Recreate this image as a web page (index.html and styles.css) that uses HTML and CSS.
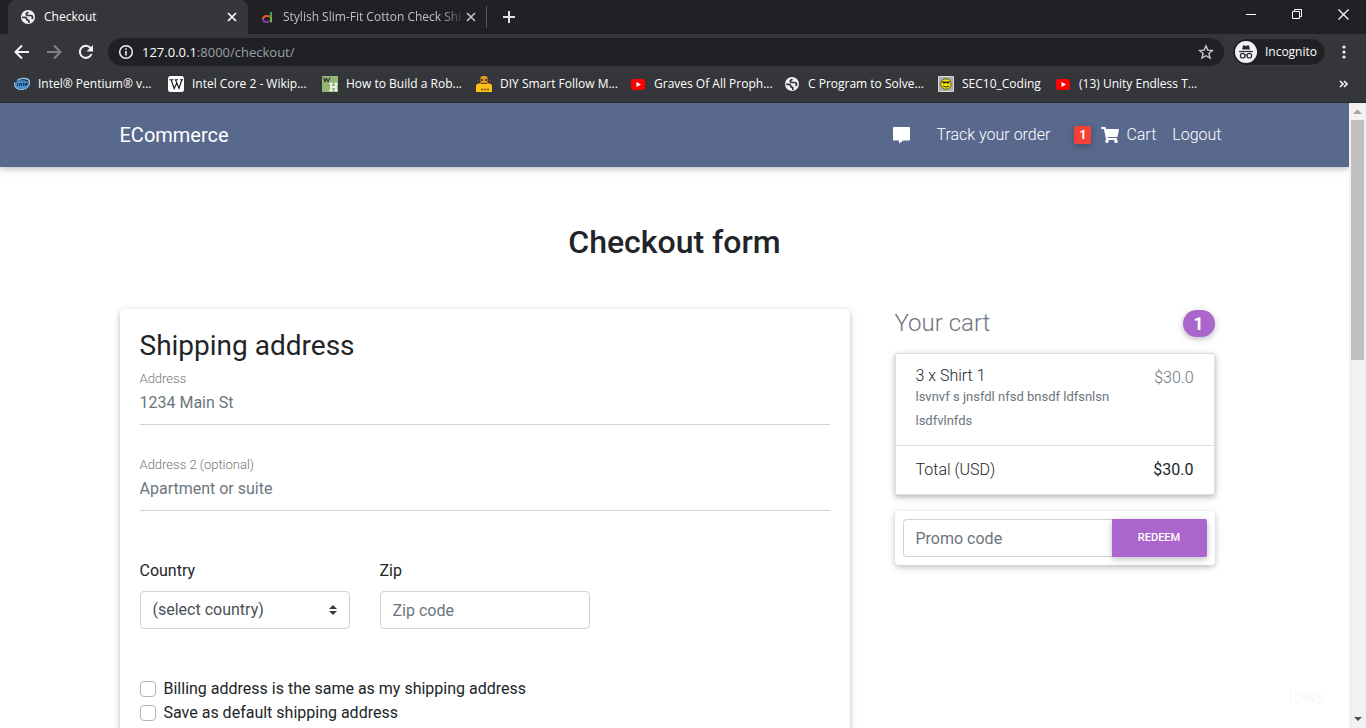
FILE: index.html
```html
<!DOCTYPE html>
<html lang="en">
<head>
<meta charset="utf-8">
<meta name="viewport" content="width=device-width, initial-scale=1">
<title>Checkout</title>
<link rel="stylesheet" href="styles.css">
</head>
<body>
<svg class="defs" aria-hidden="true">
  <symbol id="globe" viewBox="0 0 16 16"><circle cx="8" cy="8" r="7" fill="#f1f3f4"/><path d="M2.200 8.300H5q1.500 0 1.700 1.500L7 11l1.800.5V14M8.500 3.200 6.300 4.500q-.3 2 1.500 2h3q2 .2 1.800 2.300l-1 1" fill="none" stroke="#35363a" stroke-width="1.700"/></symbol>
  <symbol id="tube" viewBox="0 0 16 16"><rect x="1" y="3" width="14" height="11" rx="2.5" fill="#f00"/><path d="M6.500 6v5L11 8.500z" fill="#fff"/></symbol>
  <symbol id="cross" viewBox="0 0 10 10"><path d="m1 1 8 8M9 1 1 9" fill="none" stroke="currentColor" stroke-width="1.7"/></symbol>
</svg>

<header class="browser">
  <div class="tabstrip">
    <div class="tab tab-active">
      <svg class="favicon"><use href="#globe"/></svg>
      <span class="tab-title">Checkout</span>
      <button class="tab-close" aria-label="Close tab"><svg width="10" height="10"><use href="#cross"/></svg></button>
    </div>
    <div class="tab">
      <svg class="favicon" viewBox="0 0 16 16" fill="none" stroke-width="2"><path d="M12 3v5" stroke="#3aa655"/><path d="M12 8v5.500" stroke="#7bb342"/><path d="M11 7.500C7 6 4 7.500 4 10" stroke="#f0592a"/><path d="M4 10c0 3.500 5 4 7 1.500" stroke="#7a3ea8"/></svg>
      <span class="tab-title tab-fade">Stylish Slim-Fit Cotton Check Shir</span>
      <button class="tab-close" aria-label="Close tab"><svg width="10" height="10"><use href="#cross"/></svg></button>
    </div>
    <button class="new-tab" aria-label="New tab"><svg width="12" height="12" viewBox="0 0 12 12"><path d="M6 0v12M0 6h12" stroke="#dee1e6" stroke-width="2"/></svg></button>
    <div class="window-controls">
      <button aria-label="Minimize"><svg width="11" height="11" viewBox="0 0 11 11"><path d="M0 5.500h10" stroke="#fff"/></svg></button>
      <button aria-label="Restore"><svg width="11" height="11" viewBox="0 0 11 11" fill="none" stroke="#fff"><path d="M.5 2.500h7v7h-7zM2.500 2.500v-2h7v7h-2"/></svg></button>
      <button aria-label="Close"><svg width="11" height="11" viewBox="0 0 11 11"><path d="m.5.5 10 10m0-10-10 10" stroke="#fff" stroke-width="1.200"/></svg></button>
    </div>
  </div>

  <div class="toolbar">
    <button class="tool" aria-label="Back"><svg width="16" height="16" viewBox="0 0 16 16"><path d="M15 8H2M8 1.500 1.500 8 8 14.500" fill="none" stroke="#f1f3f4" stroke-width="2"/></svg></button>
    <button class="tool" aria-label="Forward"><svg width="16" height="16" viewBox="0 0 16 16"><path d="M1 8h13M8 1.500 14.500 8 8 14.500" fill="none" stroke="#808285" stroke-width="2"/></svg></button>
    <button class="tool" aria-label="Reload"><svg width="16" height="16" viewBox="0 0 16 16"><path d="M13.500 10A6 6 0 1 1 12.500 4" fill="none" stroke="#f1f3f4" stroke-width="2"/><path d="M15 1v6.500H8.500z" fill="#f1f3f4"/></svg></button>
    <div class="omnibox">
      <svg width="16" height="16" viewBox="0 0 16 16"><circle cx="8" cy="8" r="6.300" fill="none" stroke="#f1f3f4" stroke-width="1.500"/><path d="M8 7v4.500M8 4.300v1.500" stroke="#f1f3f4" stroke-width="1.600"/></svg>
      <span class="url"><b>127.0.0.1</b>:8000/checkout/</span>
      <svg width="16" height="16" viewBox="0 0 16 16"><path d="m8 1.800 1.800 4.300 4.600.4-3.500 3 1.100 4.600L8 11.700l-4 2.400 1.100-4.600-3.500-3 4.600-.4z" fill="none" stroke="#c4c7cb" stroke-width="1.400"/></svg>
    </div>
    <div class="profile">
      <svg width="22" height="22" viewBox="0 0 22 22"><circle cx="11" cy="11" r="11" fill="#f1f3f4"/><path d="m7 8.500 1-3.800c.2-.7 1-.5 1.400-.3.900.4 2.300.4 3.200 0 .4-.2 1.200-.4 1.400.3l1 3.800z" fill="#292a2d"/><path d="M4 10.500h14" stroke="#292a2d" stroke-width="1.200"/><g fill="none" stroke="#292a2d" stroke-width="1.200"><circle cx="7.700" cy="14.700" r="2.300"/><circle cx="14.300" cy="14.700" r="2.300"/><path d="M10 14.300q1-.6 2 0"/></g></svg>
      <span>Incognito</span>
    </div>
    <button class="menu" aria-label="Menu"><svg width="4" height="14" viewBox="0 0 4 14" fill="#f1f3f4"><circle cx="2" cy="2" r="1.600"/><circle cx="2" cy="7" r="1.600"/><circle cx="2" cy="12" r="1.600"/></svg></button>
  </div>

  <nav class="bookmarks" aria-label="Bookmarks">
    <a href="#"><svg viewBox="0 0 16 16"><path d="M3 4.500C8 1 15.500 2 15.500 6.500c0 3-2 5-5 6.500M1 6.500C-.5 11 4 14.500 10 13" fill="none" stroke="#8fc3f0" stroke-width="1.400"/><ellipse cx="8" cy="8.500" rx="7" ry="4.200" fill="#4c91cf"/><path d="M3.500 7v3M5.500 10V7.500h2V10M9.300 6.500V10M11 8.500h2.500M11 10V7.500h2v1" stroke="#16334f" stroke-width="1" fill="none"/></svg>Intel® Pentium® v...</a>
    <a href="#"><svg viewBox="0 0 16 16"><rect width="16" height="16" rx="2.500" fill="#fff"/><path d="M1.500 3.800h4M7 3.800h3M12 3.800h3M3.200 4l3 8.500L9 6.500M7.600 4l3.400 8.500L13.800 4" fill="none" stroke="#111" stroke-width="1.100"/></svg>Intel Core 2 - Wikip...</a>
    <a href="#"><svg viewBox="0 0 16 16"><path fill="#93b874" d="M0 0h16v16H0z"/><path d="m1.500 1.500 1.500 4 1.500-3 1.500 3 2-4" fill="none" stroke="#333" stroke-width="1.200"/><path d="M9 7.500v7M14 7.500v7M9 11h5M7.500 7.500h3M12.500 7.500h3M7.500 14.500h3M12.500 14.500h3" stroke="#fff" stroke-width="1.500"/></svg>How to Build a Rob...</a>
    <a href="#"><svg viewBox="0 0 16 16"><path fill="#d99b25" d="M4.500 1 6 0h4l1.500 1.500V8h-7z"/><path fill="#fcc016" d="M0 16v-5.500q0-3 3-3h10q3 0 3 3V16z"/><path fill="#754019" d="M5 3h2v2H5zm4 0h2v2H9zM5 7h6v1H5zM2 4h2v1H2zm10 0h2v1h-2z"/><g fill="#695017"><circle cx="6" cy="13.500" r="1"/><circle cx="9" cy="13.500" r="1"/><circle cx="12" cy="13.500" r="1"/></g></svg>DIY Smart Follow M...</a>
    <a href="#"><svg><use href="#tube"/></svg>Graves Of All Proph...</a>
    <a href="#"><svg><use href="#globe"/></svg>C Program to Solve...</a>
    <a href="#" class="short"><svg viewBox="0 0 16 16"><path fill="#aaa" stroke="#d8d8d8" d="M.5.5h15v15H.5z"/><circle cx="8" cy="8" r="5.200" fill="#f6e900" stroke="#36360c" stroke-width=".7"/><path fill="#222" d="M4 5.500h8L11 7.500H9L8 6.500l-1 1H5z"/><path d="M5 9.800q3 2.800 6 0" fill="none" stroke="#222"/></svg>SEC10_Coding</a>
    <a href="#"><svg><use href="#tube"/></svg>(13) Unity Endless T...</a>
    <button class="more" aria-label="More bookmarks"><svg width="9" height="8" viewBox="0 0 9 8"><path d="m1 1 3 3-3 3M5 1l3 3-3 3" fill="none" stroke="#f1f3f4" stroke-width="1.700"/></svg></button>
  </nav>
</header>

<div class="viewport">
  <div class="page">
    <nav class="navbar">
      <div class="container navbar-row">
        <a class="brand" href="#">ECommerce</a>
        <div class="nav-links">
          <a class="chat" href="#" aria-label="Messages"><svg width="17" height="17" viewBox="0 0 17 17"><path d="M1 0h15q1 0 1 1v11.500q0 1-1 1h-5.500L6 16.500v-3H1q-1 0-1-1V1q0-1 1-1z" fill="#fff"/></svg></a>
          <a class="track" href="#">Track your order</a>
          <a class="cart-link" href="#"><span class="count">1</span><svg width="18" height="16" viewBox="0 0 576 512"><path fill="#fff" d="M528 301 575 93c3-15-8-29-23-29H159l-9-45C148 8 138 0 127 0H24C11 0 0 11 0 24v16c0 13 11 24 24 24h70l70 343a56 56 0 1 0 67 9h210a56 56 0 1 0 64-10l5-25c4-15-8-29-23-29H218l-6-32h293c11 0 21-8 23-19z"/></svg>Cart</a>
          <a href="#">Logout</a>
        </div>
      </div>
    </nav>

    <main class="container">
      <h2 class="title">Checkout form</h2>
      <div class="columns">
        <form class="card">
          <h3>Shipping address</h3>
          <div class="field">
            <label for="address">Address</label>
            <input id="address" type="text" placeholder="1234 Main St">
          </div>
          <div class="field">
            <label for="address2">Address 2 (optional)</label>
            <input id="address2" type="text" placeholder="Apartment or suite">
          </div>
          <div class="pair">
            <div class="boxed">
              <label for="country">Country</label>
              <div class="select">
                <select id="country"><option>(select country)</option></select>
                <svg width="8" height="10" viewBox="0 0 4 5"><path fill="#343a40" d="M2 0 0 2h4zm0 5L0 3h4z"/></svg>
              </div>
            </div>
            <div class="boxed">
              <label for="zip">Zip</label>
              <input id="zip" type="text" placeholder="Zip code">
            </div>
          </div>
          <div class="checks">
            <label><input type="checkbox">Billing address is the same as my shipping address</label>
            <label><input type="checkbox">Save as default shipping address</label>
          </div>
        </form>

        <aside class="cart">
          <h4><span>Your cart</span><span class="pill">1</span></h4>
          <ul class="lines">
            <li>
              <div class="item"><h6>3 x Shirt 1</h6><small>lsvnvf s jnsfdl nfsd bnsdf ldfsnlsn lsdfvlnfds</small></div>
              <span class="price">$30.0</span>
            </li>
            <li><span>Total (USD)</span><strong>$30.0</strong></li>
          </ul>
          <form class="promo">
            <input type="text" placeholder="Promo code" aria-label="Promo code">
            <button type="button">REDEEM</button>
          </form>
        </aside>
      </div>
    </main>
    <div class="watermark" aria-hidden="true">lows</div>
  </div>
  <div class="scrollbar" aria-hidden="true">
    <svg width="17" height="17" viewBox="0 0 17 17"><path d="M4 11h9L8.500 6.500z" fill="#a3a3a3"/></svg>
    <div class="thumb"></div>
    <svg class="down" width="17" height="17" viewBox="0 0 17 17"><path d="M5 6h8l-4 4z" fill="#505050"/></svg>
  </div>
</div>
</body>
</html>
```
FILE: styles.css
```css
* { box-sizing: border-box; }
body {
  margin: 0;
  height: 100vh;
  display: flex;
  flex-direction: column;
  overflow: hidden;
  font: 300 16px/24px Roboto, sans-serif;
  color: #212529;
}
a { color: inherit; text-decoration: none; }
button { border: 0; padding: 0; background: none; font: inherit; color: inherit; }
svg { flex: none; }
h2, h3, h4, h6, ul { margin: 0; padding: 0; }
.defs { position: absolute; width: 0; height: 0; }

/* Browser frame */
.browser {
  background: #35363a;
  color: #fff;
  font: 400 12px/16px "Open Sans", "Noto Sans", sans-serif;
  border-bottom: 1px solid #28292c;
}
.browser button { display: flex; align-items: center; justify-content: center; }
.tabstrip { display: flex; height: 34px; background: #202124; padding-left: 8px; }
.tab { display: flex; align-items: center; width: 239px; padding: 0 9px 0 11px; color: #bdc1c6; }
.tab-active { width: 240px; padding: 0 10px 0 12px; background: #35363a; border-radius: 8px 8px 0 0; color: #fff; }
.tab:not(.tab-active) { border-style: solid; border-image: linear-gradient(transparent 20%, #55575b 20% 80%, transparent 80%) 1; border-width: 0 1px 0 0; }
.favicon { width: 16px; height: 16px; margin-right: 8px; }
.tab-title { flex: 1; overflow: hidden; white-space: nowrap; }
.tab-fade { mask-image: linear-gradient(90deg, #000 88%, transparent 103%); }
.tab-close { width: 12px; margin-left: 4px; }
.new-tab { width: 44px; }
.window-controls { display: flex; margin-left: auto; }
.window-controls button { width: 46px; height: 28px; }
.toolbar { display: flex; align-items: center; height: 36px; padding: 0 20px 0 6px; }
.tool { width: 32px; height: 28px; }
.omnibox { flex: 1; display: flex; align-items: center; gap: 8px; height: 28px; margin-left: 6px; padding: 0 10px; border-radius: 14px; background: #202124; }
.url { flex: 1; font-size: 13px; line-height: 20px; color: #9aa0a6; }
.url b { font-weight: 400; color: #fff; }
.profile { display: flex; align-items: center; gap: 8px; height: 28px; margin-left: 8px; padding: 0 8px 0 2px; border: 1px solid #3c3d41; border-radius: 14px; background: #202124; }
.menu { width: 4px; margin-left: 16px; }
.bookmarks { display: flex; align-items: center; height: 32px; padding: 0 18px 4px 14px; }
.bookmarks a { display: flex; align-items: center; gap: 8px; width: 154px; white-space: nowrap; }
.bookmarks .short { width: 117px; }
.bookmarks a svg { width: 16px; height: 16px; }
.more { margin-left: auto; }

/* Page area */
.viewport { flex: 1; display: flex; min-height: 0; }
.page { flex: 1; position: relative; overflow: hidden; background: #fff; }
.container { max-width: 1140px; margin: 0 auto; padding: 0 15px; }
.navbar { background: #59698d; color: #fff; box-shadow: 0 2px 5px rgba(0,0,0,.16), 0 2px 10px rgba(0,0,0,.12); }
.navbar-row { display: flex; align-items: center; justify-content: space-between; height: 64px; }
.brand { font-size: 20px; font-weight: 400; }
.nav-links { display: flex; align-items: center; padding-right: 8px; gap: 16px; }
.chat { display: flex; margin-right: 10px; }
.cart-link { display: flex; align-items: center; gap: 6px; margin-left: 8px; }
.cart-link svg { margin: 0 1px 0 4px; }
.count { width: 17px; border-radius: 2px; background: #f44336; font-size: 12px; line-height: 18px; font-weight: 700; text-align: center; box-shadow: 0 2px 5px rgba(0,0,0,.16), 0 2px 10px rgba(0,0,0,.12); }

.title { margin: 56px 0 48px; font-size: 32px; line-height: 38px; font-weight: 500; text-align: center; }
.columns { display: grid; grid-template-columns: minmax(0, 73fr) minmax(0, 32fr); gap: 45px; padding-right: 15px; }
.card, .promo { background: #fff; border-radius: 4px; box-shadow: 0 2px 5px rgba(0,0,0,.16), 0 2px 10px rgba(0,0,0,.12); }
.card { padding: 20px 20px 48px; }
h3 { font-size: 28px; line-height: 34px; font-weight: 400; margin-bottom: 8px; }
input, select { width: 100%; font: 400 16px/24px Roboto, sans-serif; color: #495057; background: #fff; border-radius: 0; outline: 0; }
input::placeholder { color: #6c757d; opacity: 1; }
.field { margin-bottom: 32px; }
.field label { display: block; font-size: 13px; line-height: 16px; color: #757575; }
.field input { display: block; height: 38px; padding: 0 0 6px; border: 0; border-bottom: 1px solid #ced4da; }
.pair { display: grid; grid-template-columns: repeat(3, 1fr); gap: 30px; margin: 48px 0; }
.boxed > label { display: block; margin-bottom: 8px; font-weight: 400; }
.boxed input, .select select { display: block; height: 38px; padding: 6px 12px; border: 1px solid #ced4da; border-radius: 4px; }
.select { display: grid; align-items: center; }
.select select, .select svg { grid-area: 1 / 1; }
.select select { appearance: none; padding: 5px 12px; }
.select svg { justify-self: end; margin-right: 13px; pointer-events: none; }
.checks label { display: flex; align-items: center; gap: 8px; font-weight: 400; }
.checks input { appearance: none; width: 16px; height: 16px; margin: 0; border: 1px solid #adb5bd; border-radius: 4px; }

.cart h4 { display: flex; justify-content: space-between; align-items: center; height: 29px; margin-bottom: 15px; font-size: 24px; line-height: 29px; font-weight: 300; color: #6c757d; }
.pill { width: 32px; border-radius: 14px; background: #a6c; color: #fff; font-size: 18px; line-height: 27px; font-weight: 700; text-align: center; box-shadow: 0 2px 5px rgba(0,0,0,.16), 0 2px 10px rgba(0,0,0,.12); }
.lines { list-style: none; border: 1px solid #dfdfdf; border-radius: 2px; box-shadow: 0 2px 5px rgba(0,0,0,.2), 0 2px 10px rgba(0,0,0,.12); }
.lines li { display: flex; justify-content: space-between; padding: 12px 20px; }
.lines li + li { border-top: 1px solid #dfdfdf; }
.item { width: 200px; }
.item h6 { font-size: 16px; line-height: 19px; font-weight: 300; }
.item small { display: block; font-size: 13px; line-height: 24px; font-weight: 400; color: #6c757d; }
.price { color: #6c757d; }
.lines strong { font-weight: 400; }
.promo { display: flex; margin-top: 16px; padding: 8px; }
.promo input { flex: 1; min-width: 0; height: 38px; padding: 6px 12px; border: 1px solid #ced4da; border-right: 0; border-radius: 4px 0 0 4px; }
.promo button { width: 95px; border-radius: 0 2px 2px 0; background: #a6c; color: #fff; font-size: 11px; font-weight: 500; box-shadow: 0 2px 5px rgba(0,0,0,.16), 0 2px 10px rgba(0,0,0,.12); }
.watermark { position: absolute; right: 24px; bottom: 20px; font: 300 18px/24px "Open Sans", sans-serif; color: #f5f5f5; }

.scrollbar { display: flex; flex-direction: column; width: 17px; background: #f1f1f1; }
.thumb { height: 240px; margin: 0 2px; background: #c1c1c1; }
.down { margin-top: auto; }
```
